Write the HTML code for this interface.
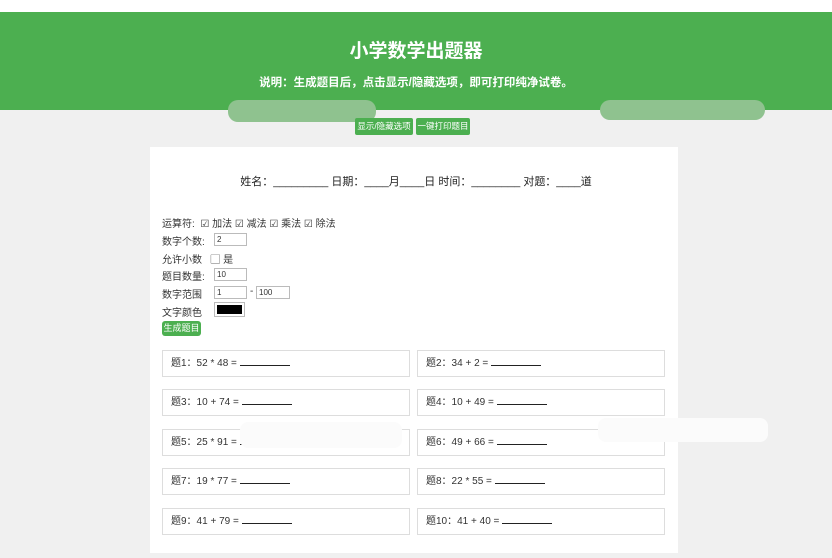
<!DOCTYPE html>
<html><head><meta charset="utf-8"><style>
*{box-sizing:border-box;margin:0;padding:0}
body{width:832px;height:558px;background:#f0f0f0;font-family:"Liberation Sans","Noto Sans CJK SC",sans-serif;color:#333;position:relative;overflow:hidden}
.top{position:absolute;left:0;top:0;width:832px;height:12px;background:#fff}
.hdr{position:absolute;left:0;top:12px;width:832px;height:98px;background:#4caf50;color:#fff;text-align:center}
.hdr h1{font-size:19px;font-weight:bold;position:absolute;top:24px;width:100%}
.hdr p{font-size:11.5px;font-weight:bold;position:absolute;top:62px;width:100%}
.blob{position:absolute;background:#8fc28f;border-radius:10px}
.btn{position:absolute;top:118px;height:17px;background:#4caf50;color:#fff;font-size:8.5px;line-height:17px;text-align:center;border-radius:2px}
.card{position:absolute;left:150px;top:147px;width:528px;height:406px;background:#fff}
.line{position:absolute;top:173px;left:0;width:832px;text-align:center;font-size:11px;color:#222}
.f{position:absolute;left:162px;font-size:10px;color:#333}
.in{position:absolute;height:13px;border:1px solid #bbb;font-size:8px;padding-left:2px;line-height:11px;background:#fff}
.box{position:absolute;width:248px;height:27px;border:1px solid #ddd;font-size:10px;line-height:25px;padding-left:8px;color:#333}
.u{display:inline-block;width:50px;border-bottom:1px solid #222;height:9px}
.wb{position:absolute;background:#fbfbfb;border-radius:8px}
</style></head><body>
<div class="top"></div>
<div class="hdr"><h1>小学数学出题器</h1><p>说明：生成题目后，点击显示/隐藏选项，即可打印纯净试卷。</p></div>
<div class="blob" style="left:228px;top:100px;width:148px;height:22px"></div>
<div class="blob" style="left:600px;top:100px;width:165px;height:20px"></div>
<div class="btn" style="left:355px;width:58px">显示/隐藏选项</div>
<div class="btn" style="left:416px;width:54px">一键打印题目</div>
<div class="card"></div>
<div class="line">姓名：_________ 日期：____月____日 时间：________ 对题：____道</div>
<div class="f" style="top:215px">运算符: &nbsp;☑ 加法 ☑ 减法 ☑ 乘法 ☑ 除法</div>
<div class="f" style="top:233px">数字个数:</div><div class="in" style="left:214px;top:233px;width:33px">2</div>
<div class="f" style="top:251px">允许小数 &nbsp;&nbsp;▢ 是</div>
<div class="f" style="top:268px">题目数量:</div><div class="in" style="left:214px;top:268px;width:33px">10</div>
<div class="f" style="top:286px">数字范围</div><div class="in" style="left:214px;top:286px;width:33px">1</div><div class="f" style="left:250px;top:286px">-</div><div class="in" style="left:256px;top:286px;width:34px">100</div>
<div class="f" style="top:304px">文字颜色</div><div style="position:absolute;left:214px;top:302px;width:31px;height:15px;border:1px solid #bbb;background:#fff;padding:2px"><div style="background:#000;width:100%;height:100%"></div></div>
<div class="btn" style="left:162px;top:321px;width:39px;height:15px;line-height:15px;font-size:9px;border-radius:3px">生成题目</div>
<div class="box" style="left:162px;top:350px">题1：52 * 48 = <span class="u"></span></div>
<div class="box" style="left:417px;top:350px">题2：34 + 2 = <span class="u"></span></div>
<div class="box" style="left:162px;top:389px">题3：10 + 74 = <span class="u"></span></div>
<div class="box" style="left:417px;top:389px">题4：10 + 49 = <span class="u"></span></div>
<div class="box" style="left:162px;top:429px">题5：25 * 91 = <span class="u"></span></div>
<div class="box" style="left:417px;top:429px">题6：49 + 66 = <span class="u"></span></div>
<div class="box" style="left:162px;top:468px">题7：19 * 77 = <span class="u"></span></div>
<div class="box" style="left:417px;top:468px">题8：22 * 55 = <span class="u"></span></div>
<div class="box" style="left:162px;top:508px">题9：41 + 79 = <span class="u"></span></div>
<div class="box" style="left:417px;top:508px">题10：41 + 40 = <span class="u"></span></div>
<div class="wb" style="left:240px;top:422px;width:162px;height:26px"></div>
<div class="wb" style="left:598px;top:418px;width:170px;height:24px"></div>
</body></html>
